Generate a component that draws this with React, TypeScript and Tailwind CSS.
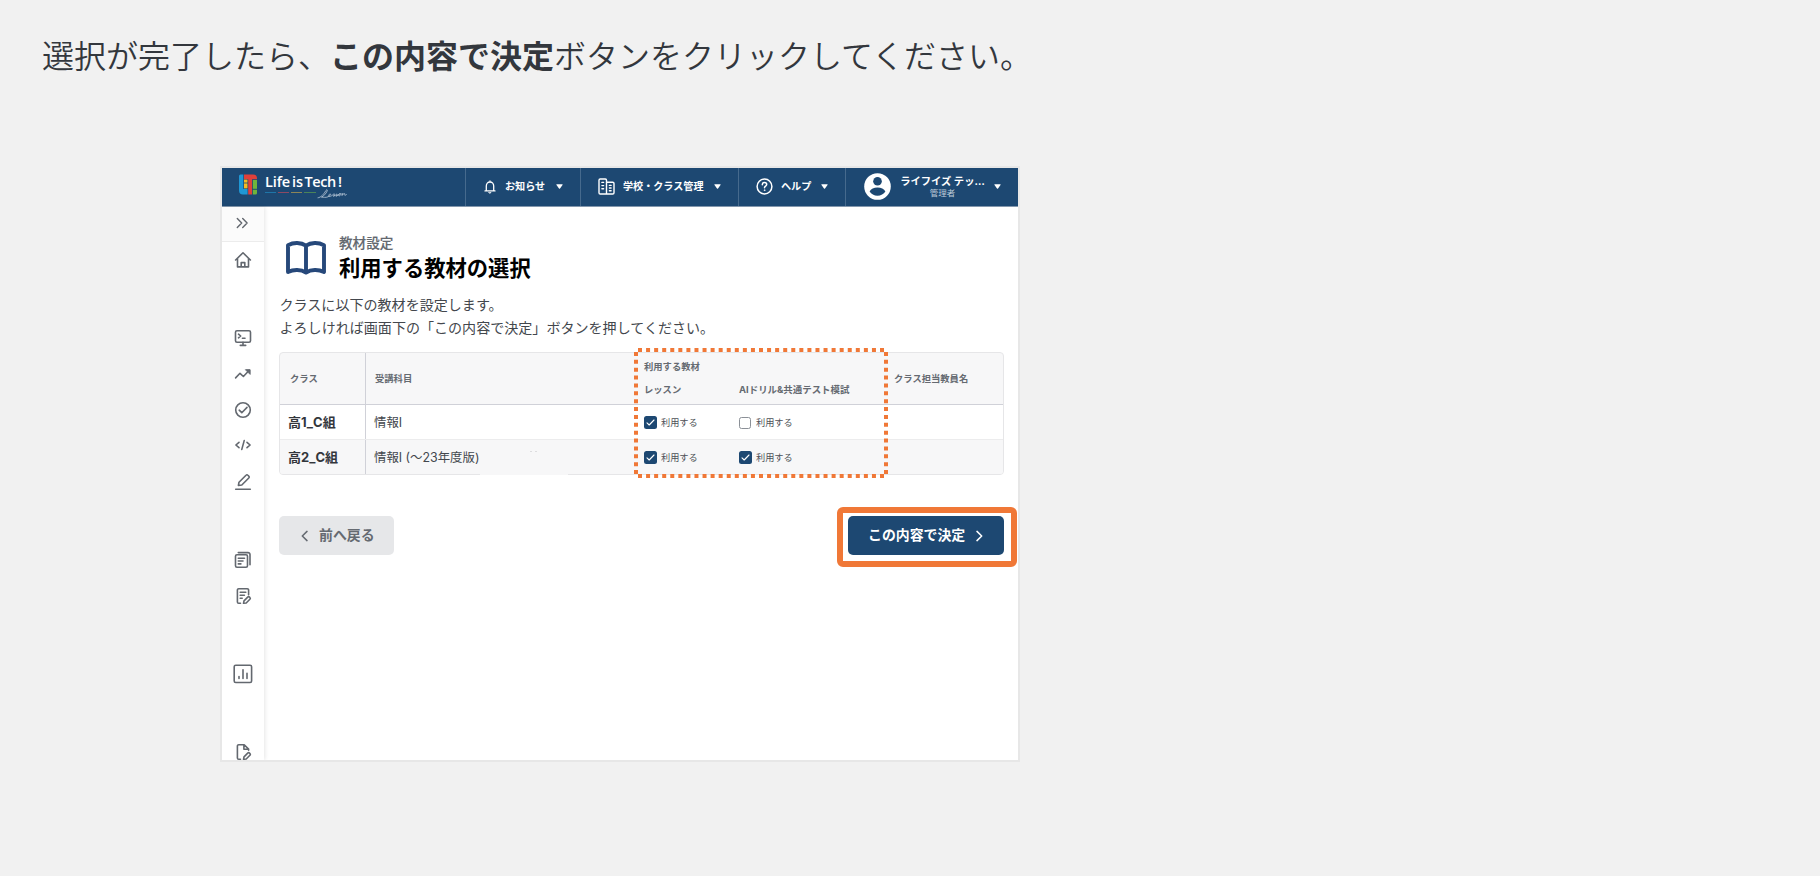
import React from 'react';

const stroke = {
  fill: 'none',
  stroke: 'currentColor',
  strokeLinecap: 'round' as const,
  strokeLinejoin: 'round' as const,
};

function Caret() {
  return (
    <svg className="h-[5px] w-[7px] shrink-0" viewBox="0 0 7 5">
      <path d="M.9 .2h5.2c.5 0 .7.5.4.8L4 4.500c-.3.3-.7.3-1 0L.5 1C.2.7.4.2.9.2z" fill="#fff" />
    </svg>
  );
}

function Logo() {
  return (
    <div className="flex items-start pt-[6px] pl-[17px]">
      <svg className="h-[21px] w-[18px] shrink-0" viewBox="0 0 18 21">
        <path d="M0 2a1.500 1.500 0 0 1 1.500-1.500H4.300V15H8.600v5.500H4a4 4 0 0 1-4-4z" fill="#1f97d4" />
        <path d="M5 .5h9A4 4 0 0 1 18 4.500V5.200H13v15.300H9.200V5.200H5z" fill="#e0403a" />
        <rect x="5" y="5.600" width="3.500" height="3" fill="#f5b921" />
        <rect x="5" y="9.400" width="3.500" height="5" fill="#f5b921" />
        <path d="M13.800 6H18v8.800h-4.200z" fill="#6fb43c" />
        <path d="M13.800 15.800H18v3.200a1.500 1.500 0 0 1-1.500 1.500h-2.700z" fill="#6fb43c" />
      </svg>
      <div className="relative ml-[8px] h-[28px] w-[84px]">
        <div className="flex h-[15px] items-center whitespace-nowrap font-['Open_Sans'] text-[14.500px] leading-[15px] font-semibold text-white">
          <span className="w-[27px] tracking-[-0.1px]">Life</span>
          <span className="w-[12.500px]">is</span>
          <span className="w-[33.500px] tracking-[-0.4px]">Tech</span>
          <span>!</span>
        </div>
        <div className="mt-[3px] flex gap-[2px]">
          <i className="h-px w-[11px] bg-[#1f76a8]" />
          <i className="h-px w-[11px] bg-[#8c4a63]" />
          <i className="h-px w-[11px] bg-[#8c8558]" />
          <i className="h-px w-[12px] bg-[#4a8459]" />
        </div>
        <svg className="absolute top-[15px] left-[52px] h-[10px] w-[32px] text-[#b9c8d8]" viewBox="0 0 32 10" {...stroke} strokeWidth=".8">
          <path d="M1 8.800C4 8.600 7 4.800 8.600 2c.8-1.400 1.900-1.600 1.700-.5-.3 1.600-3 5.300-5.800 6.700 2.200-.2 4 .700 6.500-.4 1.900-.9 2.900-2 2.600-2.700-.4-.6-1.800.3-1.900 1.500 0 1.200 1.700.9 3 .1 1.200-.8 2.100-1.700 2.500-2 .1.900.9 1.400.2 2.100-.4.5-1.200.4-1.300.1 1.500.2 2.800-1.200 3.800-2 .1.900.8 1.300.1 1.900-.4.4-1 .3-1.200.1 1.700.1 3-2.100 4.500-2.200-1.500 0-2.400 2.100-1.100 2.200 1.100 0 2-1.600 1.300-2.200.6.600 1.500.3 2.400-.2-.3.700-.7 1.400-.9 2 .9-1 2-2.200 2.700-1.900.5.300-.4 1.400.1 1.600.5.200 1-.1 1.600-.6" />
        </svg>
      </div>
    </div>
  );
}

function Header() {
  const item = 'flex h-[38px] items-center border-l border-[#466a8d] pb-[1px] text-[10.100px] font-bold text-white';
  return (
    <header className="flex h-[39px] shrink-0 border-b border-[#8397ad] bg-[#1d4872]">
      <div className="h-[38px] w-[243px]"><Logo /></div>
      <div className={item + ' w-[115px] pl-[17px]'}>
        <svg className="h-[14px] w-[14px]" viewBox="0 0 14 14" {...stroke} strokeWidth="1.3">
          <path d="M2 10.900h10M3.300 10.700V6c0-2.400 1.500-4 3.700-4s3.700 1.600 3.700 4v4.700M7 1v.8" />
          <path d="M5.800 12.400h2.400L7 13.300z" fill="currentColor" strokeWidth=".6" />
        </svg>
        <span className="ml-[8px] w-[41px] whitespace-nowrap">お知らせ</span>
        <span className="ml-[10px] flex"><Caret /></span>
      </div>
      <div className={item + ' w-[158px] pl-[17px]'}>
        <svg className="h-[17px] w-[17px]" viewBox="0 0 17 17" {...stroke} strokeWidth="1.400">
          <path d="M8.500 16H2.200A1.200 1.200 0 0 1 1 14.800V2.200A1.200 1.200 0 0 1 2.200 1h5.100a1.200 1.200 0 0 1 1.200 1.200zM8.500 4.200h6.200a1.300 1.300 0 0 1 1.300 1.300v9.200a1.300 1.300 0 0 1-1.300 1.300H8.500" />
          <path d="M3.900 4.400h1.700M3.900 7.600h1.700M3.900 10.800h1.700M11.400 7.400h1.700M11.400 10h1.700M11.400 12.700h1.700" />
        </svg>
        <span className="ml-[8px] w-[81px] whitespace-nowrap">学校・クラス管理</span>
        <span className="ml-[10px] flex"><Caret /></span>
      </div>
      <div className={item + ' w-[107px] pl-[17px]'}>
        <svg className="h-[17px] w-[17px]" viewBox="0 0 17 17" {...stroke} strokeWidth="1.500">
          <circle cx="8.500" cy="8.500" r="7.400" />
          <path d="M6.300 6.700c0-1.300 1-2.100 2.200-2.100s2.200.8 2.200 2c0 1.500-2.200 1.700-2.200 3.200" />
          <circle cx="8.500" cy="12.200" r=".4" fill="currentColor" strokeWidth=".8" />
        </svg>
        <span className="ml-[8px] w-[31px] whitespace-nowrap">ヘルプ</span>
        <span className="ml-[9px] flex"><Caret /></span>
      </div>
      <div className={item + ' w-[173px] pl-[18px]'}>
        <svg className="h-[27px] w-[27px] shrink-0" viewBox="0 0 27 27">
          <circle cx="13.500" cy="13.500" r="13.300" fill="#fff" />
          <circle cx="13.500" cy="8.300" r="4.300" fill="#1d4872" />
          <path d="M5.600 18.600c1.300-2.700 4.300-4.100 7.900-4.100s6.600 1.400 7.900 4.100c-1.700 2.700-4.500 4.200-7.900 4.200s-6.200-1.500-7.900-4.200z" fill="#1d4872" />
        </svg>
        <div className="ml-[9px] flex w-[85px] flex-col items-center">
          <span className="text-[10.300px] leading-[13px] whitespace-nowrap">ライフイズ テッ…</span>
          <span className="text-[8.500px] leading-[11px] font-normal text-[#bccad8]">管理者</span>
        </div>
        <span className="ml-[9px] flex"><Caret /></span>
      </div>
    </header>
  );
}

function Sidebar() {
  const ic = 'h-[18px] w-[18px] shrink-0';
  const p = { viewBox: '0 0 18 18', ...stroke, strokeWidth: 1.6 };
  return (
    <aside className="flex w-[42px] shrink-0 flex-col items-center overflow-hidden text-[#63686f] shadow-[1px_0_4px_rgba(0,0,0,0.1)]">
      <div className="flex h-[35px] w-full shrink-0 items-center justify-center border-b border-[#ececec] bg-[#fbfbfb] pr-[2px] pb-[2px]">
        <svg className={ic} {...p} strokeWidth={1.4}><path d="M4.300 4.400L8.700 9l-4.400 4.600M9.700 4.400L14.100 9l-4.400 4.600" /></svg>
      </div>
      <svg className={ic + ' mt-[9px]'} {...p}>
        <path d="M1.600 9L9 1.800 16.400 9M3.500 7.600v8.300h11V7.600M7.200 15.800v-4.200h3.600v4.200" />
      </svg>
      <svg className={ic + ' mt-[60px]'} {...p}>
        <rect x="1.500" y="1.800" width="15" height="11.400" rx="1.500" />
        <path d="M4.500 5.200l2.200 1.800-2.200 1.800M8.400 9.300h2.600M9 13.400v2.800M6.300 16.400h5.400" />
      </svg>
      <svg className={ic + ' mt-[18px]'} {...p}>
        <path d="M1.600 12.900L6 8.300l3.400 3.200 5.600-6" />
        <path d="M11.800 4.700h4.300V9z" fill="currentColor" strokeWidth="1" />
      </svg>
      <svg className={ic + ' mt-[18px]'} {...p}>
        <circle cx="9" cy="9" r="7.300" />
        <path d="M5.200 9.200l2.600 2.500 5.200-5.300" />
      </svg>
      <svg className={ic + ' mt-[17px]'} {...p}>
        <path d="M5 6.300L1.900 9 5 11.700M13 6.300L16.100 9 13 11.700M10.200 4.600L7.800 13.400" />
      </svg>
      <svg className={ic + ' mt-[19px]'} {...p}>
        <path d="M1.700 16.200h14.600M4.400 12.500l.6-3.300 7-7a1.300 1.300 0 0 1 1.900 0l.9.9a1.300 1.300 0 0 1 0 1.900l-7 7z" />
      </svg>
      <svg className={ic + ' mt-[60px]'} {...p}>
        <rect x="1.500" y="3.700" width="12" height="12.600" rx="1.500" />
        <path d="M4.300 1.600h9.700a2 2 0 0 1 2 2v10.200M4.300 7.200h6.200M4.300 10h4.700M4.300 12.900h2.600" />
      </svg>
      <svg className={ic + ' mt-[18px]'} {...p}>
        <path d="M6.500 16.200H4.700a1.300 1.300 0 0 1-1.300-1.300V3a1.300 1.300 0 0 1 1.300-1.300h8.600A1.300 1.300 0 0 1 14.600 3v4.700M6.200 5.200h5.600M6.200 8.200h4.200M6.200 11.200h2" />
        <path d="M9.500 16.300l.5-2.400 3.700-3.800a1.300 1.300 0 0 1 1.800 0l.4.400a1.300 1.300 0 0 1 0 1.800L12.200 16z" />
      </svg>
      <svg className="mt-[59px] h-[20px] w-[20px] shrink-0" viewBox="0 0 20 20" {...stroke} strokeWidth={1.6}>
        <rect x="1.200" y="1.300" width="17.400" height="17.200" rx="1.500" />
        <path d="M6 12.600v1.900M10 5.800v8.700M14 9.300v5.200" />
      </svg>
      <svg className={ic + ' mt-[59px]'} {...p}>
        <path d="M6.500 16.200H4.700a1.300 1.300 0 0 1-1.300-1.300V3a1.300 1.300 0 0 1 1.300-1.300h5.500l4.400 4.400v1.200M9.900 1.900v4.400h4.500" />
        <path d="M9.500 16.300l.5-2.400 3.700-3.800a1.300 1.300 0 0 1 1.800 0l.4.400a1.300 1.300 0 0 1 0 1.800L12.200 16z" />
      </svg>
    </aside>
  );
}

function Check({ on }: { on?: boolean }) {
  return (
    <div className="flex items-center text-[9.200px] text-[#4d5157]">
      {on ? (
        <span className="flex h-[13px] w-[13px] items-center justify-center rounded-[2.500px] bg-[#1d4872]">
          <svg className="h-[9px] w-[9px]" viewBox="0 0 9 9" {...stroke} stroke="#fff" strokeWidth="1.100"><path d="M1 4.900l2.200 2.100L8 2" /></svg>
        </span>
      ) : (
        <span className="mr-[1px] h-[12px] w-[12px] rounded-[2.500px] border border-[#8b9097] bg-white" />
      )}
      <span className="ml-[4px] whitespace-nowrap">利用する</span>
    </div>
  );
}

function Row({ name, subject, ai, tinted }: { name: string; subject: string; ai?: boolean; tinted?: boolean }) {
  return (
    <div className={'flex items-stretch ' + (tinted ? 'h-[35px] border-t border-[#ececed] bg-[#f7f7f8]' : 'h-[34px] bg-white')}>
      <div className="flex w-[86px] items-center border-r border-[#d0d1d8] pt-[2px] pl-[8px] text-[13px] font-bold text-[#33363c]">{name}</div>
      <div className="flex w-[278px] items-center pt-[2px] pl-[8px] text-[12.400px] text-[#43474d]">{subject}</div>
      <div className="flex w-[95px] items-center pt-[2px]"><Check on /></div>
      <div className="flex items-center pt-[2px]"><Check on={ai} /></div>
    </div>
  );
}

function MaterialTable() {
  return (
    <div className="relative mt-[13px] w-[725px]">
      <div className="h-[123px] w-[725px] overflow-hidden rounded-[4px] border border-[#e6e6e8] bg-[#f7f7f8]">
        <div className="flex h-[52px] border-b border-[#d0d1d8] text-[9.300px] font-bold text-[#656a71]">
          <div className="flex w-[86px] items-center border-r border-[#d0d1d8] pl-[10px]">クラス</div>
          <div className="flex w-[278px] items-center pl-[9px]">受講科目</div>
          <div className="flex w-[250px] flex-col pt-[7px]">
            <div className="h-[14px] leading-[14px]">利用する教材</div>
            <div className="mt-[9px] flex h-[14px] leading-[14px]">
              <span className="w-[95px]">レッスン</span>
              <span className="text-[9.450px] whitespace-nowrap">AIドリル&amp;共通テスト模試</span>
            </div>
          </div>
          <div className="flex items-center">クラス担当教員名</div>
        </div>
        <Row name="高1_C組" subject="情報I" />
        <Row name="高2_C組" subject="情報I (〜23年度版)" ai tinted />
      </div>
      <div className="absolute top-[121px] left-[201px] h-[2px] w-[88px] bg-[#f7f7f8]" />
      <div className="absolute top-[99px] left-[251px] flex gap-[3px]">
        <i className="h-px w-[2px] bg-[#dddddf]" />
        <i className="h-px w-[2px] bg-[#dddddf]" />
      </div>
      <svg className="absolute top-[-4px] left-[355px] h-[130px] w-[254px]" viewBox="0 0 254 130" fill="none" stroke="#f07837" strokeWidth="4">
        <path d="M4 2H251M4 128H251" strokeDasharray="4 4.067" />
        <path d="M2 4V126M252 4V126" strokeDasharray="4 3.867" />
      </svg>
    </div>
  );
}

export default function App() {
  return (
    <div className="h-[876px] w-[1820px] overflow-hidden bg-[#f1f1f1] font-['Inter','Noto_Sans_CJK_JP',sans-serif]" lang="ja">
      <h1 className="ml-[42px] pt-[33px] text-[32px] leading-[48px] font-[350] whitespace-nowrap text-[#33373d]">
        選択が完了したら、<b className="font-bold">この内容で決定</b>ボタンをクリックしてください。
      </h1>
      <div className="mt-[85px] ml-[220px] flex h-[596px] w-[800px] flex-col overflow-hidden border-2 border-[#e7e7e7] bg-white">
        <Header />
        <div className="flex min-h-0 flex-1">
          <Sidebar />
          <main className="flex-1 pl-[15px]">
            <div className="flex h-[62px] items-center pt-[22px]">
              <svg className="mt-[18px] ml-[7px] h-[34px] w-[40px] text-[#26487a]" viewBox="0 0 40 34" {...stroke} strokeWidth="3.900">
                <path d="M20 4.700C15 1.200 7.500 1.200 2 4.200V31c5.500-2.700 13-2.700 18 .6 5-3.300 12.500-3.300 18-.6V4.200C32.500 1.200 25 1.200 20 4.700zM20 4.700v26.900" />
              </svg>
              <div className="mt-[20px] ml-[13px]">
                <p className="text-[13.600px] leading-[18px] font-medium text-[#63686f] [-webkit-text-stroke:0.15px_#63686f]">教材設定</p>
                <h2 className="text-[21.300px] leading-[32px] font-bold text-black">利用する教材の選択</h2>
              </div>
            </div>
            <p className="mt-[24px] ml-[0.500px] text-[14.050px] leading-[23px] whitespace-nowrap text-[#43474d]">
              クラスに以下の教材を設定します。<br />
              よろしければ画面下の「この内容で決定」ボタンを押してください。
            </p>
            <MaterialTable />
            <div className="mt-[32px] flex w-[738px] items-start justify-between">
              <button className="mt-[9px] flex h-[39px] w-[115px] items-center rounded-[5px] bg-[#e6e7e9] pl-[22px] text-[13.900px] font-bold text-[#656a71]">
                <svg className="h-[12px] w-[7px]" viewBox="0 0 7 12" {...stroke} strokeWidth="1.500"><path d="M6 1.400L1.300 6 6 10.600" /></svg>
                <span className="ml-[11px]">前へ戻る</span>
              </button>
              <div className="h-[60px] w-[180px] rounded-[6px] border-[6px] border-[#f07837] px-[5px] pt-[3px]">
                <button className="flex h-[39px] w-[156px] items-center rounded-[5px] bg-[#1d4872] pl-[20px] text-[13.900px] font-bold text-white">
                  <span>この内容で決定</span>
                  <svg className="ml-[11px] h-[12px] w-[7px]" viewBox="0 0 7 12" {...stroke} strokeWidth="1.500"><path d="M1 1.400L5.700 6 1 10.600" /></svg>
                </button>
              </div>
            </div>
          </main>
        </div>
      </div>
    </div>
  );
}
